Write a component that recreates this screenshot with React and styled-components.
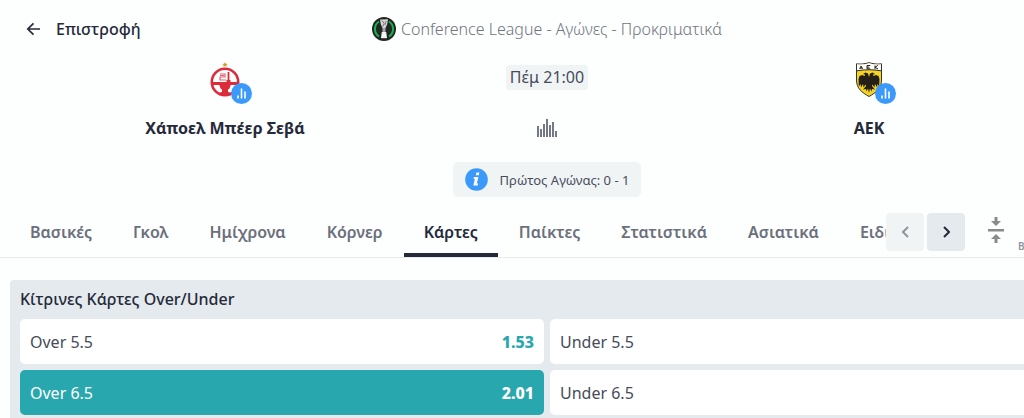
import { useState } from 'react';
import styled, { createGlobalStyle } from 'styled-components';

const palette = {
  ink: '#252a3a',
  text: '#464c5b',
  muted: '#6b707c',
  light: '#70757f',
  disabled: '#8f939c',
  panel: '#e4eaed',
  soft: '#f1f4f5',
  line: '#e6ebee',
  teal: '#29a7ae',
  blue: '#3b99fc',
};

const GlobalStyle = createGlobalStyle`
  * {
    box-sizing: border-box;
  }

  body {
    margin: 0;
    background: #fdfefe;
    color: ${palette.ink};
    font-family: 'Noto Sans', 'Open Sans', sans-serif;
    font-size: 16px;
    overflow: hidden;
  }

  button {
    border: none;
    padding: 0;
    background: none;
    font: inherit;
    color: inherit;
    cursor: pointer;
  }
`;

const Page = styled.div`
  min-width: 1094px;
`;

const TopBar = styled.header`
  display: grid;
  grid-template-columns: 1fr auto 1fr;
  align-items: center;
  height: 58px;
  padding: 0 26px;
`;

const BackButton = styled.button`
  display: flex;
  align-items: center;
  gap: 15px;
  justify-self: start;
  font-weight: 500;
`;

const League = styled.div`
  display: flex;
  align-items: center;
  gap: 5px;
  color: ${palette.light};
  font-weight: 300;
`;

const Match = styled.section`
  display: grid;
  grid-template-columns: repeat(3, 1fr);
  padding: 4px 64px 0;
`;

const Column = styled.div`
  display: flex;
  flex-direction: column;
  align-items: center;
`;

const Crest = styled.div`
  position: relative;
  display: flex;
  justify-content: center;
  width: 30px;
  height: 36px;
`;

const StatsBadge = styled.button`
  position: absolute;
  left: 21px;
  top: 21px;
  display: flex;
  align-items: center;
  justify-content: center;
  width: 21px;
  height: 21px;
  border-radius: 50%;
  background: ${palette.blue};
`;

const TeamName = styled.div`
  margin-top: 18px;
  font-weight: 700;
  line-height: 24px;
`;

const Kickoff = styled.div`
  margin-top: 3px;
  padding: 0 4px;
  border-radius: 3px;
  background: ${palette.soft};
  color: ${palette.text};
  line-height: 25px;
`;

const StatsButton = styled.button`
  display: flex;
  margin-top: 29px;
`;

const Info = styled.div`
  display: flex;
  align-items: center;
  gap: 12px;
  width: fit-content;
  height: 35px;
  margin: 22px auto 0;
  padding: 0 12px;
  border-radius: 5px;
  background: ${palette.soft};
  color: ${palette.text};
  font-size: 13px;
`;

const TabBar = styled.nav`
  display: flex;
  align-items: center;
  height: 51px;
  margin-top: 10px;
  padding-left: 10px;
  border-bottom: 1px solid ${palette.line};
`;

const TabList = styled.div`
  display: flex;
  flex: 1;
  gap: 1px;
  height: 50px;
  overflow: hidden;
`;

const Tab = styled.button`
  flex: none;
  height: 50px;
  padding: 4px 20px 0;
  border-bottom: 4px solid ${({ $active }) => ($active ? palette.ink : 'transparent')};
  color: ${({ $active }) => ($active ? palette.ink : palette.muted)};
  font-weight: 600;
`;

const ArrowGroup = styled.div`
  display: flex;
  gap: 3px;
`;

const ArrowButton = styled.button`
  display: flex;
  align-items: center;
  justify-content: center;
  width: 38px;
  height: 38px;
  border-radius: 4px;
  background: ${palette.panel};
  color: ${palette.ink};

  &:disabled {
    background: ${palette.soft};
    color: ${palette.disabled};
    cursor: default;
  }
`;

const Tools = styled.div`
  display: flex;
  align-items: center;
  gap: 14px;
  width: 129px;
  height: 38px;
  padding-left: 23px;
`;

const CollapseButton = styled.button`
  display: flex;
  margin-bottom: 4px;
`;

const BuilderButton = styled.button`
  align-self: flex-end;
  color: ${palette.disabled};
  font-size: 10px;
  font-weight: 600;
  line-height: 10px;
`;

const Market = styled.section`
  margin: 22px 10px 0;
  padding: 0 10px 10px;
  border-radius: 4px;
  background: ${palette.panel};
`;

const MarketTitle = styled.h2`
  margin: 0;
  font-size: 16px;
  font-weight: 500;
  line-height: 39px;
`;

const Selections = styled.div`
  display: grid;
  grid-template-columns: 1fr 1fr;
  gap: 6px;
`;

const Selection = styled.button`
  display: flex;
  align-items: center;
  justify-content: space-between;
  height: 45px;
  padding: 0 10px;
  border-radius: 5px;
  background: ${({ $picked }) => ($picked ? palette.teal : '#fff')};
  color: ${({ $picked }) => ($picked ? '#fff' : palette.text)};
`;

const Odds = styled.span`
  color: ${({ $picked }) => ($picked ? '#fff' : palette.teal)};
  font-weight: 800;
`;

const BackIcon = () => (
  <svg width="15" height="14" viewBox="0 0 15 14" fill="none" stroke="currentColor" strokeWidth="1.7">
    <path d="M14 7H2M7.5 1.3 1.8 7l5.7 5.7" />
  </svg>
);

const LeagueIcon = () => (
  <svg width="24" height="24" viewBox="0 0 24 24">
    <circle cx="12" cy="12" r="12" fill="#222624" />
    <path d="M7 4.5a9 9 0 0 0 0 15M17 4.5a9 9 0 0 1 0 15" fill="none" stroke="#16b24b" strokeWidth="2" />
    <path d="M8 2.5l8-.3-.8 5-1.8 4v5l1.2 5H9.400l1.200-5v-5l-1.800-4z" fill="#d4d4d2" />
    <path d="M10 3.5l2.2 3-1.4 3M14 4l-1 4M12 11v6" fill="none" stroke="#77797a" />
    <path d="M9.8 15h4.4l.8 6H9z" fill="#f4f4f4" />
  </svg>
);

const HapoelCrest = () => (
  <svg width="30" height="36" viewBox="0 0 30 36">
    <path d="M15 0l.8 1.7 1.9.2-1.4 1.3.4 1.9-1.7-1-1.7 1 .4-1.9-1.4-1.3 1.9-.2z" fill="#c9a02e" />
    <circle cx="15" cy="20" r="13.2" fill="#fff" stroke="#dc2b3b" strokeWidth="2.6" />
    <path d="M3 20h24v3H3z" fill="#dc2b3b" />
    <path d="M10 12h5v3h-5v3h6M10 13.5h4" fill="none" stroke="#e2606b" strokeWidth="1.2" />
    <path d="M18.5 10v10M16.5 19h4" fill="none" stroke="#dc2b3b" strokeWidth="1.8" />
    <path d="M9 22h12l-1.500 4.500-2 1.500h-5l-2-1.500zM8 31.500c2-2.500 12-2.500 14 0-4 3-10 3-14 0z" fill="#dc2b3b" />
    <path d="M12 27h6v4h-6z" fill="#dc2b3b" />
  </svg>
);

const AekCrest = () => (
  <svg width="28" height="36" viewBox="0 0 28 36">
    <path
      d="M1.5 1.8C6 2.5 10 1.8 14 .7c4 1.1 8 1.8 12.5 1.1V18c0 8.5-5.5 12.5-12.5 16.5C7 30.5 1.5 26.5 1.5 18z"
      fill="#f7d324"
      stroke="#333"
    />
    <path d="M2 2.3C6 3 10 2.3 14 1.2c4 1.1 8 1.8 12 1.1v6.2c-8-1.4-16-1.4-24 0z" fill="#fff" />
    <path d="M2 8.8c8-1.4 16-1.4 24 0" fill="none" stroke="#333" />
    <path
      d="M4.600 7l1.500-3 1.500 3M5 6h2.200M12 6.800V3.500h3.200M12 5.200h2.400M12 6.800h3.200M20 3.500V7M22.800 3.500L20 5.200 23 7"
      fill="none"
      stroke="#222"
    />
    <path
      d="M14 15l-1-3.500-2.500-1-2.500 1.500 2.200.7L9.500 14 7 13l-2.500 1-1 3 .3 7.500L5.500 22l.5 3.500L8 22l.5 3.500 2-3 .5 1.500-3 3.500 3-.5.5 2.500 1.500-3 1 4.500 1-4.500 1.500 3 .5-2.500 3 .5-3-3.500.5-1.500 2 3L20 22l2 3.500.5-3.500 1.700 2.500.3-7.500-1-3-2.500-1-2.500 1-.7-1.300 2.200-.7-2.500-1.500-2.500 1z"
      fill="#242018"
    />
  </svg>
);

const BadgeBars = () => (
  <svg width="11" height="11" viewBox="0 0 11 11" stroke="#fff" strokeWidth="1.6" strokeLinecap="round">
    <path d="M2 8v2M5.5 1v9M9 4v6" />
  </svg>
);

const StatsIcon = () => (
  <svg width="20" height="18" viewBox="0 0 20 18" stroke="#5c6270" strokeWidth="1.7">
    <path d="M1 7v11M4 10v8M7 5v13M10 0v18M13 6v12M16 3v15M19 12v6" />
  </svg>
);

const InfoIcon = () => (
  <svg width="23" height="23" viewBox="0 0 23 23">
    <circle cx="11.5" cy="11.5" r="11.3" fill={palette.blue} />
    <path d="M11.4 4.5h3l-.6 2.700h-3zM9 9h4.400l-1.600 6.500h1.400l-.5 2h-4.400l1.600-6.500H8.500z" fill="#fff" />
  </svg>
);

const Chevron = ({ d }) => (
  <svg width="8" height="12" viewBox="-1 0 8 12" fill="none" stroke="currentColor" strokeWidth="2">
    <path d={d} />
  </svg>
);

const CollapseIcon = () => (
  <svg width="16" height="26" viewBox="0 0 16 26" fill="#8a8a8a">
    <path d="M6.5 0h3v4H13L8 9 3 4h3.5zM0 12h16v2.4H0zM8 17l5 5H9.5v4h-3v-4H3z" />
  </svg>
);

const tabs = [
  'Βασικές',
  'Γκολ',
  'Ημίχρονα',
  'Κόρνερ',
  'Κάρτες',
  'Παίκτες',
  'Στατιστικά',
  'Ασιατικά',
  'Ειδικά',
];

const selections = [
  { name: 'Over 5.5', odds: '1.53' },
  { name: 'Under 5.5' },
  { name: 'Over 6.5', odds: '2.01' },
  { name: 'Under 6.5' },
];

const Team = ({ name, crest }) => (
  <Column>
    <Crest>
      {crest}
      <StatsBadge aria-label={name}>
        <BadgeBars />
      </StatsBadge>
    </Crest>
    <TeamName>{name}</TeamName>
  </Column>
);

const App = () => {
  const [tab, setTab] = useState('Κάρτες');
  const [picked, setPicked] = useState('Over 6.5');

  return (
    <>
      <GlobalStyle />
      <Page>
        <TopBar>
          <BackButton>
            <BackIcon />
            Επιστροφή
          </BackButton>
          <League>
            <LeagueIcon />
            Conference League - Αγώνες - Προκριματικά
          </League>
        </TopBar>

        <Match>
          <Team name="Χάποελ Μπέερ Σεβά" crest={<HapoelCrest />} />
          <Column>
            <Kickoff>Πέμ 21:00</Kickoff>
            <StatsButton aria-label="Στατιστικά">
              <StatsIcon />
            </StatsButton>
          </Column>
          <Team name="ΑΕΚ" crest={<AekCrest />} />
        </Match>

        <Info>
          <InfoIcon />
          Πρώτος Αγώνας: 0 - 1
        </Info>

        <TabBar>
          <TabList>
            {tabs.map((name) => (
              <Tab key={name} $active={name === tab} onClick={() => setTab(name)}>
                {name}
              </Tab>
            ))}
          </TabList>
          <ArrowGroup>
            <ArrowButton disabled aria-label="Προηγούμενο">
              <Chevron d="M6 1 1 6l5 5" />
            </ArrowButton>
            <ArrowButton aria-label="Επόμενο">
              <Chevron d="M1 1l5 5-5 5" />
            </ArrowButton>
          </ArrowGroup>
          <Tools>
            <CollapseButton aria-label="Σύμπτυξη">
              <CollapseIcon />
            </CollapseButton>
            <BuilderButton>B</BuilderButton>
          </Tools>
        </TabBar>

        <Market>
          <MarketTitle>Κίτρινες Κάρτες Over/Under</MarketTitle>
          <Selections>
            {selections.map(({ name, odds }) => (
              <Selection key={name} $picked={name === picked} onClick={() => setPicked(name)}>
                {name}
                {odds && <Odds $picked={name === picked}>{odds}</Odds>}
              </Selection>
            ))}
          </Selections>
        </Market>
      </Page>
    </>
  );
};

export default App;
